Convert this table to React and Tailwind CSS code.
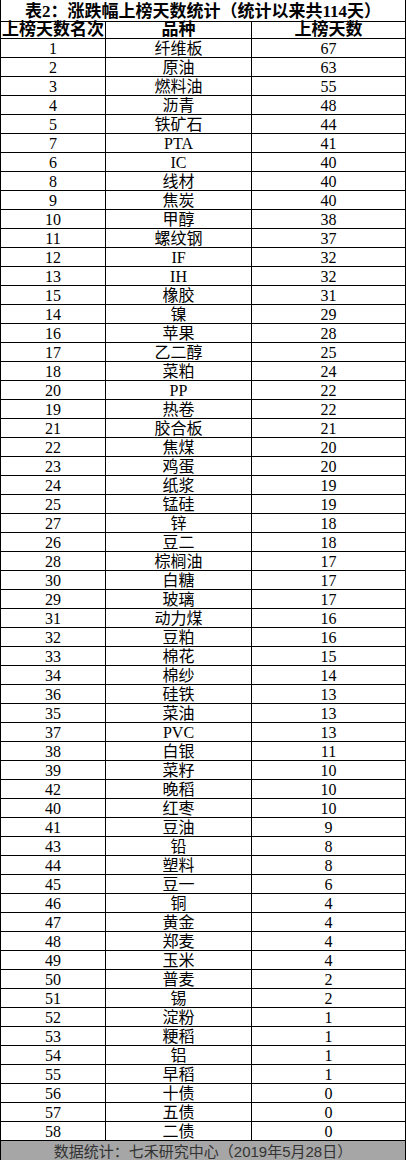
const rows = [
  [1, '纤维板', 67], [2, '原油', 63], [3, '燃料油', 55], [4, '沥青', 48], [5, '铁矿石', 44],
  [7, 'PTA', 41], [6, 'IC', 40], [8, '线材', 40], [9, '焦炭', 40], [10, '甲醇', 38],
  [11, '螺纹钢', 37], [12, 'IF', 32], [13, 'IH', 32], [15, '橡胶', 31], [14, '镍', 29],
  [16, '苹果', 28], [17, '乙二醇', 25], [18, '菜粕', 24], [20, 'PP', 22], [19, '热卷', 22],
  [21, '胶合板', 21], [22, '焦煤', 20], [23, '鸡蛋', 20], [24, '纸浆', 19], [25, '锰硅', 19],
  [27, '锌', 18], [26, '豆二', 18], [28, '棕榈油', 17], [30, '白糖', 17], [29, '玻璃', 17],
  [31, '动力煤', 16], [32, '豆粕', 16], [33, '棉花', 15], [34, '棉纱', 14], [36, '硅铁', 13],
  [35, '菜油', 13], [37, 'PVC', 13], [38, '白银', 11], [39, '菜籽', 10], [42, '晚稻', 10],
  [40, '红枣', 10], [41, '豆油', 9], [43, '铅', 8], [44, '塑料', 8], [45, '豆一', 6],
  [46, '铜', 4], [47, '黄金', 4], [48, '郑麦', 4], [49, '玉米', 4], [50, '普麦', 2],
  [51, '锡', 2], [52, '淀粉', 1], [53, '粳稻', 1], [54, '铝', 1], [55, '早稻', 1],
  [56, '十债', 0], [57, '五债', 0], [58, '二债', 0],
]

const cell = 'flex items-end justify-center leading-[16px] border-r border-black'

export default function App() {
  return (
    <div className="w-[406px] h-[1160px] bg-white text-black border-x border-black font-['Liberation_Serif','Noto_Sans_CJK_SC',serif] overflow-hidden">
      {/* Title */}
      <div className="h-[22px] border-b border-black flex items-end justify-center text-[17px] font-bold leading-[19px]">
        表2：涨跌幅上榜天数统计（统计以来共114天）
      </div>

      {/* Header */}
      <div className="h-[17px] border-b border-black grid grid-cols-[105px_146px_1fr] text-[17px] font-bold">
        <div className={cell}>上榜天数名次</div>
        <div className={cell}>品种</div>
        <div className="flex items-end justify-center leading-[16px]">上榜天数</div>
      </div>

      {/* Rows */}
      {rows.map(([rank, name, days]) => (
        <div key={rank} className="h-[19px] border-b border-black grid grid-cols-[105px_146px_1fr] text-[16px]">
          <div className={cell}>{rank}</div>
          <div className={cell}>{name}</div>
          <div className="flex items-end justify-center leading-[16px]">{days}</div>
        </div>
      ))}

      {/* Footer */}
      <div className="h-[19px] bg-[#a6a6a6] flex items-end justify-center text-[15px] leading-[17px] text-[#333333] font-['Liberation_Sans','Noto_Sans_CJK_SC',sans-serif]">
        数据统计：七禾研究中心（2019年5月28日）
      </div>
    </div>
  )
}
